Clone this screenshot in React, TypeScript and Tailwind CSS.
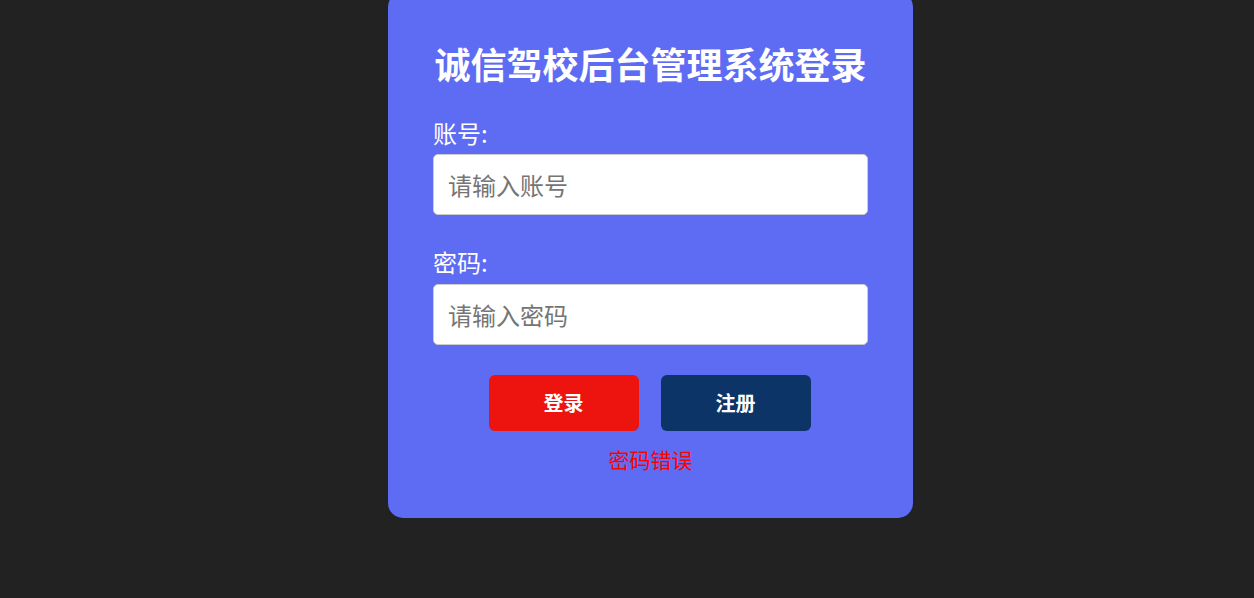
import React from "react";

export default function App() {
  return (
    <div
      className="min-h-[598px] w-full bg-[#222222] flex justify-center items-start overflow-hidden pl-[47px]"
      style={{ fontFamily: '"Noto Sans CJK SC", "Noto Sans", sans-serif' }}
    >
      <div className="-mt-[8px] w-[525px] rounded-[15px] bg-[#5e6cf3] px-[45px] pt-[51px] pb-[44px] flex flex-col">
        <h1 className="text-center text-[36px] leading-[40px] font-bold text-white whitespace-nowrap">
          诚信驾校后台管理系统登录
        </h1>
        <label className="mt-[35px] text-[24px] leading-[30px] text-white">账号:</label>
        <input
          className="mt-[6px] h-[61px] w-full rounded-[5px] border border-[#cccccc] bg-white px-[14px] text-[24px] text-black outline-none placeholder:text-[#757575]"
          placeholder="请输入账号"
        />
        <label className="mt-[32px] text-[24px] leading-[30px] text-white">密码:</label>
        <input
          type="password"
          className="mt-[7px] h-[61px] w-full rounded-[5px] border border-[#cccccc] bg-white px-[14px] text-[24px] text-black outline-none placeholder:text-[#757575]"
          placeholder="请输入密码"
        />
        <div className="mt-[30px] flex justify-center gap-[22px] pr-[2px]">
          <button className="h-[56px] w-[150px] rounded-[6px] bg-[#ed140f] text-[20px] font-bold text-white">
            登录
          </button>
          <button className="h-[56px] w-[150px] rounded-[6px] bg-[#0d3467] text-[20px] font-bold text-white">
            注册
          </button>
        </div>
        <p className="mt-[13px] text-center text-[21px] leading-[30px] text-[#ff0000]">密码错误</p>
      </div>
    </div>
  );
}
